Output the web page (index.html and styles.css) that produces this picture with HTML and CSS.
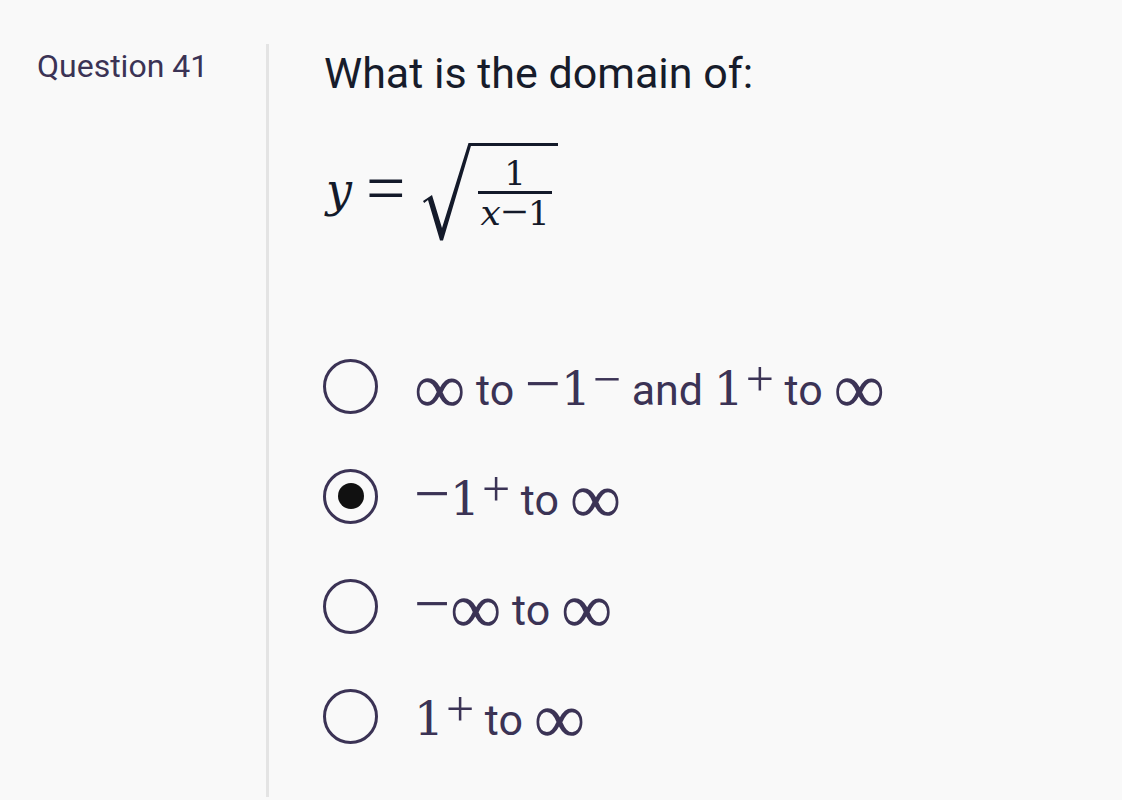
FILE: index.html
```html
<!DOCTYPE html>
<html lang="en">
<head>
<meta charset="utf-8">
<title>Question 41</title>
<link rel="stylesheet" href="styles.css">
</head>
<body>
<div class="page">
  <aside class="side">
    <div class="qnum">Question 41</div>
  </aside>
  <main class="main">
    <h1 class="q">What is the domain of:</h1>
    <div class="formula">
      <span class="lhs"><span class="mi">y</span><span class="eq">=</span></span>
      <span class="sqrt">
        <svg class="surd" width="48" height="98" viewBox="0 0 48 98" aria-hidden="true">
          <path d="M0 58 L9 52 L19 85 L45.5 0 L48 0 L48 2.8 L20 97.5 L17 97.5 L5 57 L1.2 60 Z"/>
        </svg>
        <span class="radicand">
          <span class="frac">
            <span class="num"><span class="mn">1</span></span>
            <span class="bar"></span>
            <span class="den"><span class="mi">x</span><span class="mo">−</span><span class="mn">1</span></span>
          </span>
        </span>
      </span>
    </div>
    <ul class="opts">
      <li class="opt">
        <span class="radio"></span>
        <span class="label"><span class="inf">∞</span> to <span class="mo">−</span><span class="mn">1</span><sup class="sup">−</sup> and <span class="mn">1</span><sup class="sup">+</sup> to <span class="inf">∞</span></span>
      </li>
      <li class="opt">
        <span class="radio checked"><span class="dot"></span></span>
        <span class="label"><span class="mo">−</span><span class="mn">1</span><sup class="sup">+</sup> to <span class="inf">∞</span></span>
      </li>
      <li class="opt">
        <span class="radio"></span>
        <span class="label"><span class="mo">−</span><span class="inf">∞</span> to <span class="inf">∞</span></span>
      </li>
      <li class="opt">
        <span class="radio"></span>
        <span class="label"><span class="mn">1</span><sup class="sup">+</sup> to <span class="inf">∞</span></span>
      </li>
    </ul>
  </main>
</div>
</body>
</html>
```
FILE: styles.css
```css
html, body {
  margin: 0;
  padding: 0;
  background: #f9f9f9;
}

body {
  font-family: Roboto, "Liberation Sans", sans-serif;
  color: #3b3355;
}

.page {
  display: flex;
  padding-top: 44px;
  height: 753px;
}

.side {
  width: 266px;
  flex: none;
}

.qnum {
  padding: 3px 0 0 37px;
  font-size: 32px;
  color: #3b3355;
}

.main {
  flex: 1;
  border-left: 3px solid #e4e4e4;
  padding-left: 55px;
}

.q {
  margin: 0;
  padding-top: 4px;
  font-size: 43px;
  font-weight: 400;
  color: #171c2b;
  line-height: normal;
}

/* ---------- formula ---------- */
.formula {
  display: flex;
  align-items: flex-start;
  margin-top: 45px;
  color: #141a2a;
}

.mi {
  font-family: "DejaVu Serif", serif;
  font-style: italic;
}

.mo {
  font-family: "Liberation Serif", serif;
}

.mn {
  font-family: "DejaVu Serif", serif;
}

.lhs {
  display: inline-block;
  margin-top: 17px;
  font-family: "DejaVu Serif", serif;
  font-size: 46px;
  line-height: 60px;
  white-space: nowrap;
}

.lhs .mi {
  margin-left: 2px;
}

.eq {
  font-family: "Liberation Serif", serif;
  font-size: 70px;
  line-height: 0;
  vertical-align: -6px;
  margin-left: 14px;
  margin-right: 18px;
}

.sqrt {
  display: inline-flex;
  align-items: stretch;
}

.surd {
  display: block;
  fill: #141a2a;
}

.radicand {
  display: flex;
  align-items: center;
  border-top: 3px solid #141a2a;
  margin-left: -1px;
  padding: 0 6px 0 8px;
  height: 95px;
}

.frac {
  display: inline-flex;
  flex-direction: column;
  align-items: center;
}

.num, .den {
  font-size: 34px;
  line-height: 34px;
  white-space: nowrap;
}

.num {
  line-height: 32px;
  margin-bottom: 2px;
}

.den {
  padding: 0 2px 0 2px;
}

.den .mi {
  font-size: 36px;
}

.den .mo {
  font-size: 48px;
  line-height: 0;
  vertical-align: -3px;
}

.bar {
  align-self: stretch;
  height: 3px;
  background: #141a2a;
  margin-bottom: 2px;
}

/* ---------- options ---------- */
.opts {
  list-style: none;
  margin: 90px 0 0 -1px;
  padding: 0;
}

.opt {
  display: flex;
  align-items: center;
  height: 110px;
}

.radio {
  flex: none;
  box-sizing: border-box;
  width: 55px;
  height: 55px;
  border: 3px solid #3b3355;
  border-radius: 50%;
  display: flex;
  align-items: center;
  justify-content: center;
  margin-right: 36px;
}

.dot {
  width: 26px;
  height: 26px;
  border-radius: 50%;
  background: #111111;
}

.label {
  font-size: 43px;
  line-height: 54px;
  padding-top: 7px;
  color: #3b3355;
  white-space: nowrap;
}

.label .mn {
  font-size: 47px;
  line-height: 0;
}

.label .mo {
  font-size: 64px;
  line-height: 0;
}

.inf {
  font-family: "Liberation Serif", serif;
  font-size: 72px;
  line-height: 0;
  vertical-align: -8px;
}

.sup {
  font-family: "Liberation Serif", serif;
  font-size: 50px;
  line-height: 0;
  vertical-align: 9px;
  margin-left: 2px;
}
```
